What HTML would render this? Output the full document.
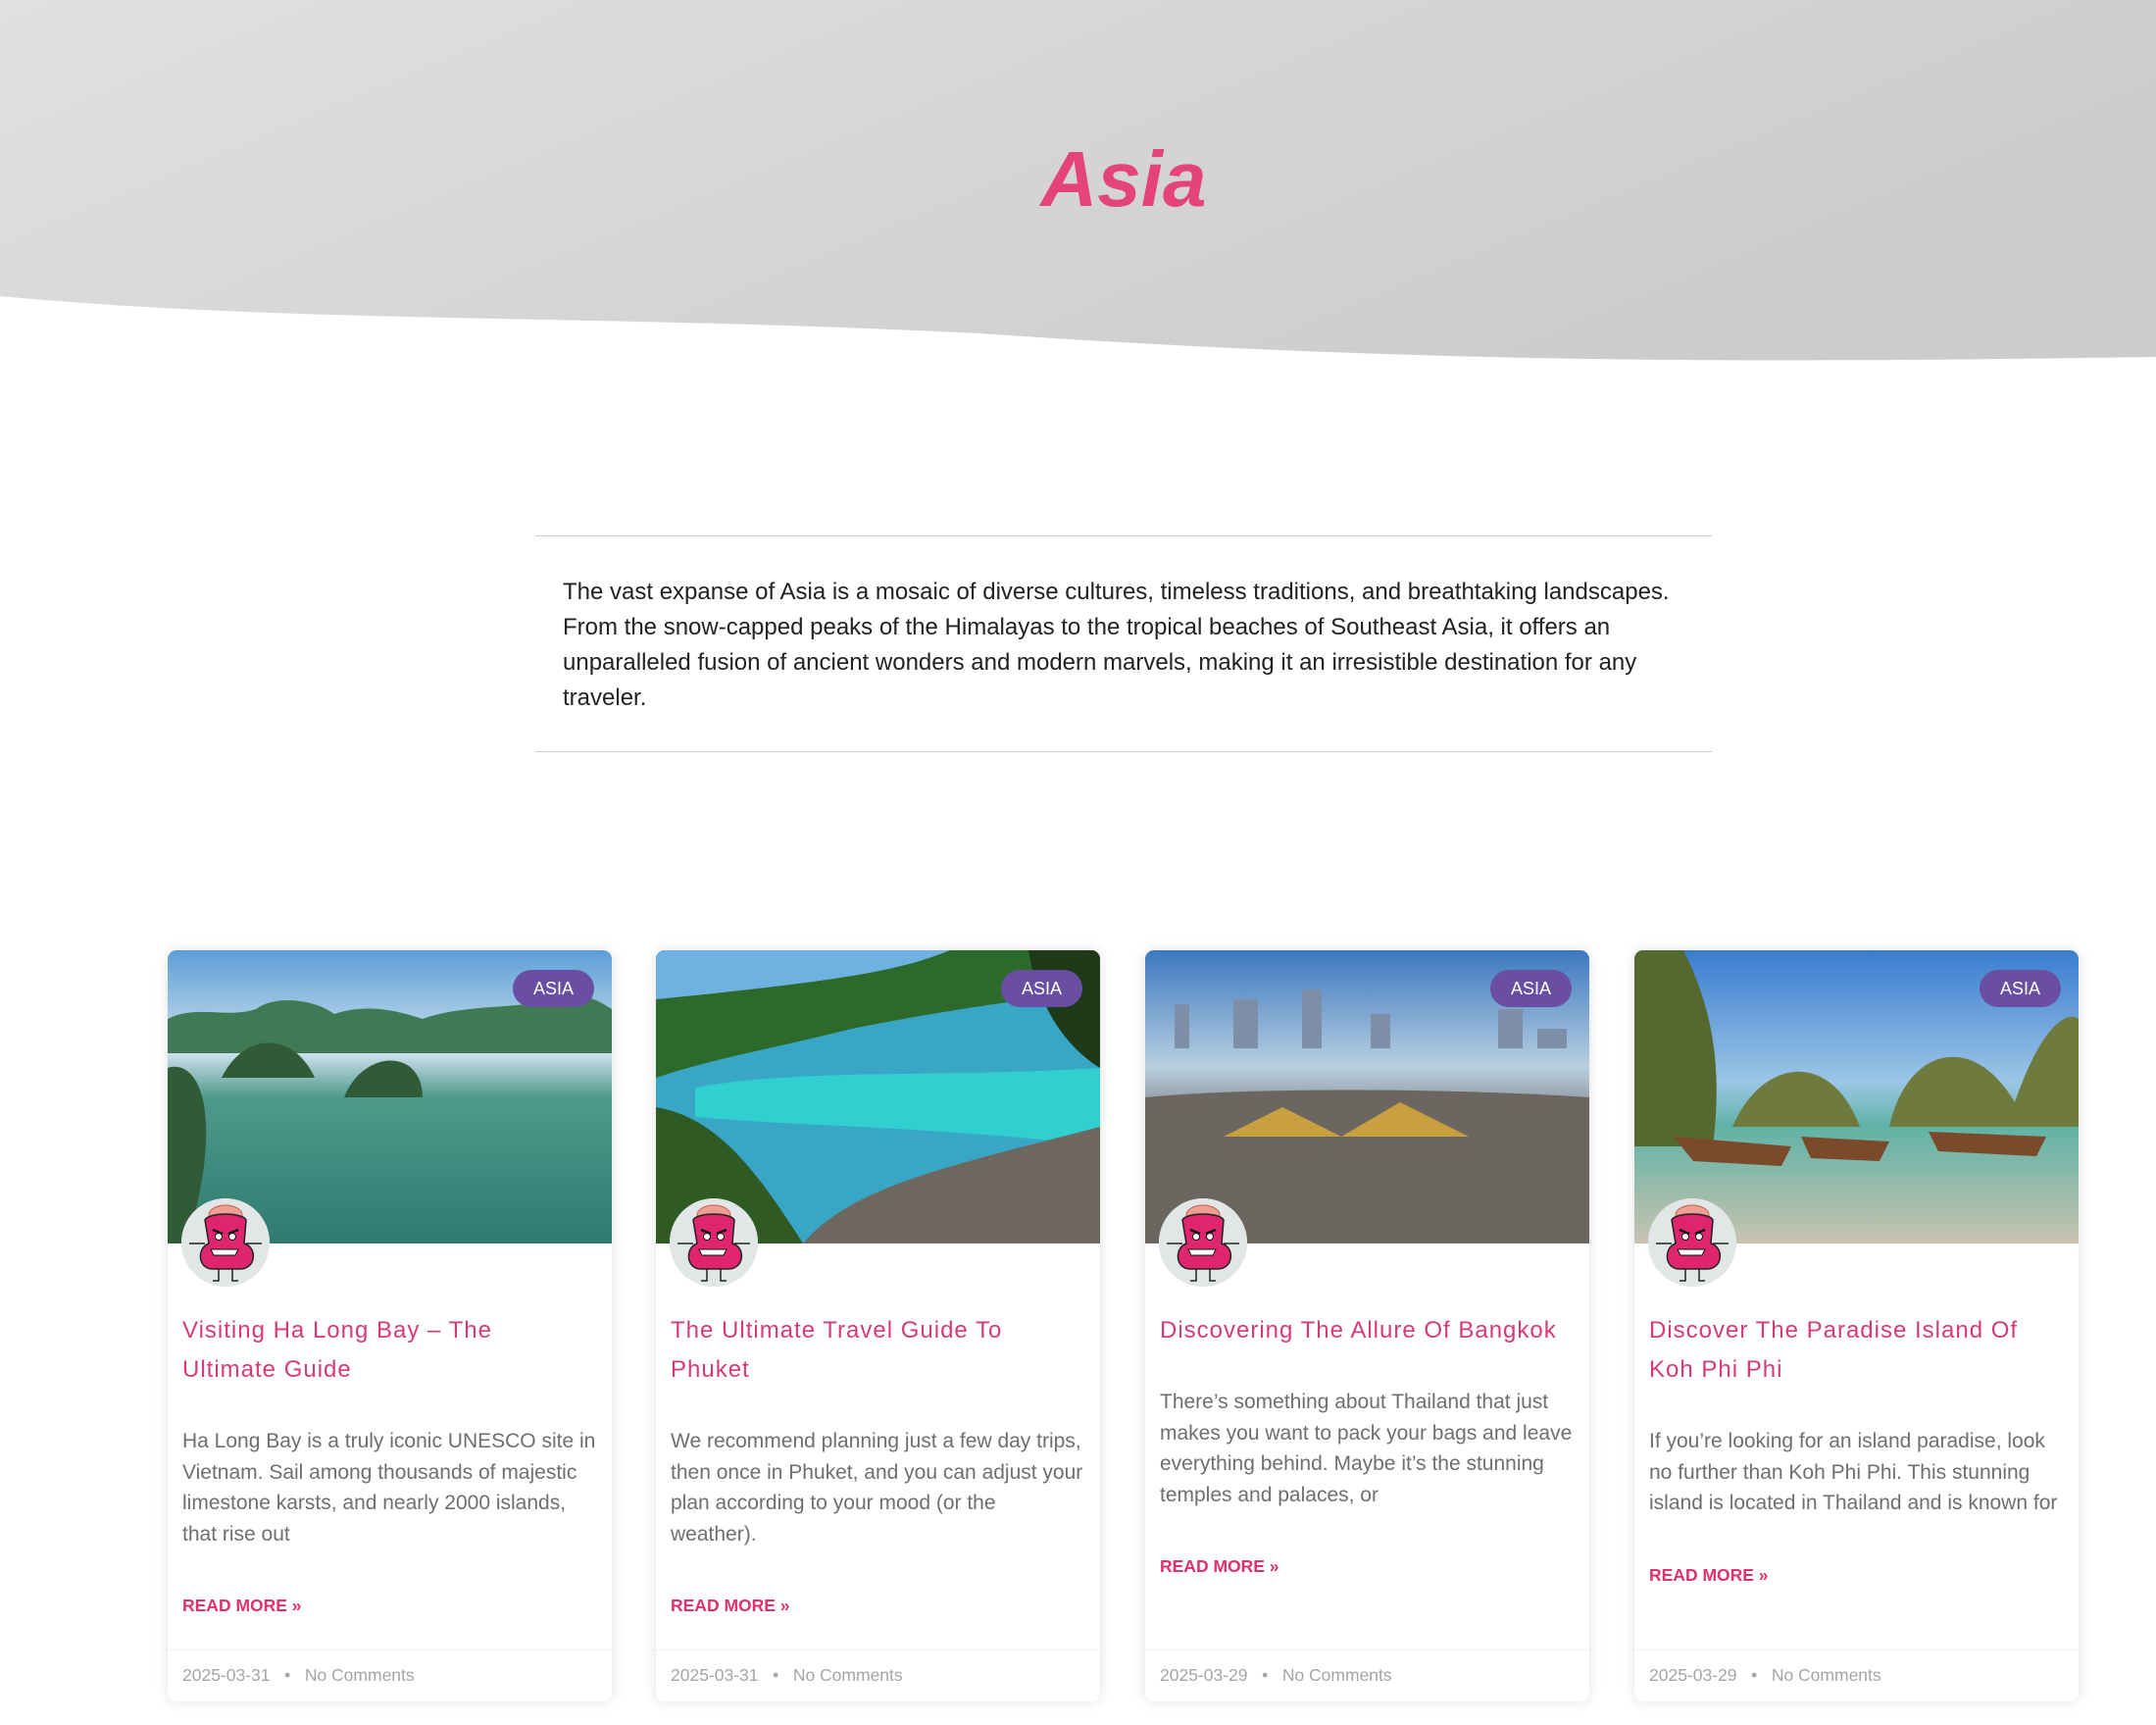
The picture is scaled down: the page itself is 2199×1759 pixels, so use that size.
<!DOCTYPE html>
<html><head><meta charset="utf-8">
<style>
*{box-sizing:border-box;margin:0;padding:0}
body{width:2199px;height:1759px;background:#fff;font-family:"Liberation Sans",Arial,sans-serif;position:relative;overflow:hidden}
.hero{position:absolute;left:0;top:0;width:2199px;height:380px}
h1{position:absolute;top:137px;left:0;width:2292px;text-align:center;font-size:80px;font-style:italic;font-weight:bold;color:#e5437b;letter-spacing:0px}
.hr{position:absolute;left:546px;width:1200px;height:1px;background:#cfcfcf}
.intro{position:absolute;left:574px;top:586px;width:1150px;font-size:24px;line-height:36px;color:#222}
.card{position:absolute;top:969px;width:453px;height:766px;background:#fff;border-radius:9px;box-shadow:0 0 14px rgba(0,0,0,.12);overflow:hidden}
.img{position:absolute;left:0;top:0;width:453px;height:299px}
.badge{position:absolute;right:18px;top:20px;width:83px;height:38px;border-radius:19px;background:#6a4ea3;color:#fff;font-size:18px;line-height:38px;text-align:center}
.av{position:absolute;left:14px;top:253px;width:90px;height:90px;border-radius:50%;background:#e3e6e6;overflow:hidden}
.body{position:absolute;left:15px;top:368px;width:422.5px}
.t{font-size:24px;line-height:40px;color:#d63a78;letter-spacing:1px;width:417px}
.ex{margin-top:37px;font-size:21px;line-height:31.5px;color:#6f6f6f}
.rm{margin-top:45px;font-size:17.5px;line-height:24px;font-weight:bold;color:#e0306e}
.ft{position:absolute;left:0;top:713px;width:453px;height:53px;border-top:1px solid #eee;padding-left:15px;font-size:17.5px;line-height:50px;color:#a5a5a5}
</style></head><body>
<svg class="hero" viewBox="0 0 2199 380" preserveAspectRatio="none">
<defs><linearGradient id="g" x1="0" y1="0" x2="1" y2="0.4"><stop offset="0" stop-color="#e0e0e0"/><stop offset="1" stop-color="#cccccc"/></linearGradient></defs>
<path d="M0 0H2199V364C1900 368 1500 375 1000 340C600 320 300 330 0 302Z" fill="url(#g)"/>
</svg>
<h1>Asia</h1>
<div class="hr" style="top:546px"></div>
<div class="intro">The vast expanse of Asia is a mosaic of diverse cultures, timeless traditions, and breathtaking landscapes. From the snow-capped peaks of the Himalayas to the tropical beaches of Southeast Asia, it offers an unparalleled fusion of ancient wonders and modern marvels, making it an irresistible destination for any traveler.</div>
<div class="hr" style="top:766px"></div>

<svg width="0" height="0" style="position:absolute"><defs>
<g id="mon">
<ellipse cx="45" cy="17" rx="17" ry="10" fill="#f0a090" stroke="#c06050"/>
<path d="M24 22C28 14 62 14 66 22L64 46C78 50 76 72 60 72L32 72C16 72 16 50 28 46Z" fill="#e0256f" stroke="#222" stroke-width="1.5"/>
<path d="M32 32l10 4M58 32l-10 4" stroke="#111" stroke-width="2.5"/>
<circle cx="38" cy="39" r="3.5" fill="#fff" stroke="#111"/><circle cx="52" cy="39" r="3.5" fill="#fff" stroke="#111"/>
<path d="M30 52h28l-3 6h-22z" fill="#fff" stroke="#111"/>
<path d="M8 46H24M66 46H82M38 72v12h-6M52 72v12h6" stroke="#222" stroke-width="1.5" fill="none"/>
</g></defs></svg>

<div class="card" style="left:171px">
 <svg class="img" viewBox="0 0 453 299" preserveAspectRatio="none">
  <defs><linearGradient id="s1" x1="0" y1="0" x2="0" y2="1"><stop offset="0" stop-color="#5d9ed6"/><stop offset=".35" stop-color="#cfe2ee"/><stop offset=".5" stop-color="#4f9a8c"/><stop offset="1" stop-color="#2f7a70"/></linearGradient></defs>
  <rect width="453" height="299" fill="url(#s1)"/>
  <path d="M0 70C30 55 60 70 90 60C110 45 150 50 170 65C200 55 230 60 260 70C300 55 360 60 390 50C410 40 430 45 453 60V105H0Z" fill="#3f7a55"/>
  <path d="M55 130C80 80 130 85 150 130Z M180 150C200 100 260 100 260 150Z M0 120C30 110 60 160 20 299H0Z" fill="#2f5c36"/>
 </svg>
 <div class="badge">ASIA</div>
 <svg class="av" viewBox="0 0 90 90"><rect width="90" height="90" fill="#e3e6e6"/><use href="#mon"/></svg>
 <div class="body"><div class="t">Visiting Ha Long Bay – The Ultimate Guide</div>
 <div class="ex">Ha Long Bay is a truly iconic UNESCO site in Vietnam. Sail among thousands of majestic limestone karsts, and nearly 2000 islands, that rise out</div>
 <div class="rm">READ MORE »</div></div>
 <div class="ft">2025-03-31 &nbsp; • &nbsp; No Comments</div>
</div>

<div class="card" style="left:669px">
 <svg class="img" viewBox="0 0 453 299" preserveAspectRatio="none">
  <rect width="453" height="299" fill="#3aa6c6"/>
  <path d="M0 0H453V40C380 50 300 60 200 80C120 100 60 110 0 130Z" fill="#2c6a2c"/>
  <path d="M0 0H300C250 20 200 30 0 50Z" fill="#6fb1e0"/>
  <path d="M40 140C150 120 300 130 453 120V200C300 180 150 180 40 170Z" fill="#2fd0cf"/>
  <path d="M0 160C60 170 100 220 150 299H0Z" fill="#2f5a24"/>
  <path d="M150 299C200 240 300 220 453 180V299Z" fill="#6e675e"/>
  <path d="M380 0H453V120C420 100 390 60 380 0Z" fill="#1f3a18"/>
 </svg>
 <div class="badge">ASIA</div>
 <svg class="av" viewBox="0 0 90 90"><rect width="90" height="90" fill="#e3e6e6"/><use href="#mon"/></svg>
 <div class="body"><div class="t">The Ultimate Travel Guide To Phuket</div>
 <div class="ex">We recommend planning just a few day trips, then once in Phuket, and you can adjust your plan according to your mood (or the weather).</div>
 <div class="rm">READ MORE »</div></div>
 <div class="ft">2025-03-31 &nbsp; • &nbsp; No Comments</div>
</div>

<div class="card" style="left:1168px">
 <svg class="img" viewBox="0 0 453 299" preserveAspectRatio="none">
  <defs><linearGradient id="s3" x1="0" y1="0" x2="0" y2="1"><stop offset="0" stop-color="#3c78c0"/><stop offset=".4" stop-color="#b8cfe0"/><stop offset=".55" stop-color="#8a8f96"/><stop offset="1" stop-color="#5d5a55"/></linearGradient></defs>
  <rect width="453" height="299" fill="url(#s3)"/>
  <path d="M30 100V55h15v45zM90 100V50h25v50zM160 100V40h20v60zM230 100V65h20v35zM360 100V60h25v40zM400 100V80h30v20z" fill="#7c8fa6"/>
  <path d="M0 150C100 140 300 140 453 150V299H0Z" fill="#6c6660"/>
  <path d="M80 190L140 160L200 190L260 155L330 190Z" fill="#c9a040"/>
 </svg>
 <div class="badge">ASIA</div>
 <svg class="av" viewBox="0 0 90 90"><rect width="90" height="90" fill="#e3e6e6"/><use href="#mon"/></svg>
 <div class="body"><div class="t" style="white-space:nowrap">Discovering The Allure Of Bangkok</div>
 <div class="ex">There’s something about Thailand that just makes you want to pack your bags and leave everything behind. Maybe it’s the stunning temples and palaces, or</div>
 <div class="rm">READ MORE »</div></div>
 <div class="ft">2025-03-29 &nbsp; • &nbsp; No Comments</div>
</div>

<div class="card" style="left:1667px">
 <svg class="img" viewBox="0 0 453 299" preserveAspectRatio="none">
  <defs><linearGradient id="s4" x1="0" y1="0" x2="0" y2="1"><stop offset="0" stop-color="#3a7cd0"/><stop offset=".45" stop-color="#9cc6e6"/><stop offset=".6" stop-color="#5fb3a6"/><stop offset="1" stop-color="#c9c2b0"/></linearGradient></defs>
  <rect width="453" height="299" fill="url(#s4)"/>
  <path d="M0 0H50C80 60 90 120 80 200H0Z" fill="#55682e"/>
  <path d="M100 180C130 110 200 100 230 180Z M260 180C280 90 360 80 400 180Z M380 180C410 80 440 60 453 70V180Z" fill="#6f7a3e"/>
  <path d="M40 190L160 200L150 220L60 215Z M170 190L260 195L250 215L180 212Z M300 185L420 190L410 210L310 205Z" fill="#7a4a2a"/>
 </svg>
 <div class="badge">ASIA</div>
 <svg class="av" viewBox="0 0 90 90"><rect width="90" height="90" fill="#e3e6e6"/><use href="#mon"/></svg>
 <div class="body"><div class="t">Discover The Paradise Island Of Koh Phi Phi</div>
 <div class="ex">If you’re looking for an island paradise, look no further than Koh Phi Phi. This stunning island is located in Thailand and is known for</div>
 <div class="rm">READ MORE »</div></div>
 <div class="ft">2025-03-29 &nbsp; • &nbsp; No Comments</div>
</div>
</body></html>
